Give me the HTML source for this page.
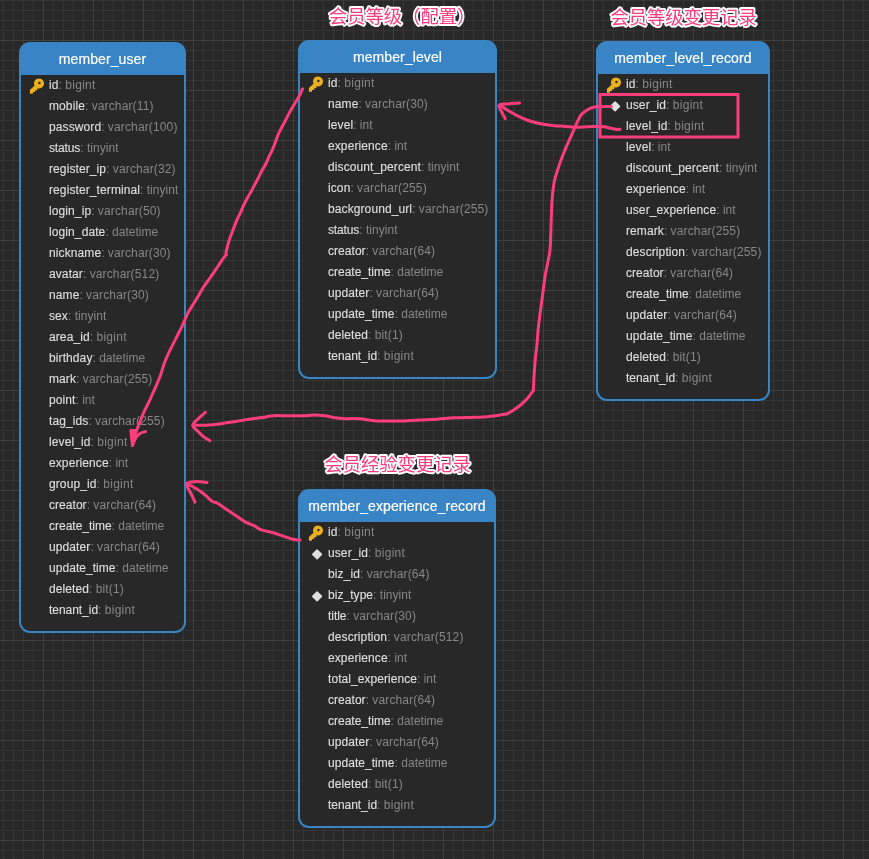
<!DOCTYPE html><html><head><meta charset="utf-8"><title>ER</title><style>

*{margin:0;padding:0;box-sizing:border-box}
html,body{width:869px;height:859px;overflow:hidden;background:#282828}
body{font-family:"Liberation Sans",sans-serif;position:relative;
 background-color:#282828;
 background-image:
  linear-gradient(to right,#404040 1px,transparent 1px),
  linear-gradient(to bottom,#404040 1px,transparent 1px),
  linear-gradient(to right,#353535 1px,transparent 1px),
  linear-gradient(to bottom,#353535 1px,transparent 1px);
 background-size:50px 50px,50px 50px,10px 10px,10px 10px;
 background-position:43px 0,0 40px,3px 0,0 0;}
.tb{position:absolute;will-change:transform;border-radius:11px;background:#3884c4;padding:0 2px 2px 2px}
.bd{background:#282828;border-radius:0 0 9px 9px;padding-bottom:10px}
.hd{height:33px;color:#fff;font-size:14px;text-align:center;line-height:35px;letter-spacing:0.1px;-webkit-text-stroke:0.2px #fff}
.rw{height:21px;position:relative;font-size:12px;line-height:21px;white-space:nowrap;color:#878787;padding-left:28px}
.rw b{font-weight:normal;color:#dedede;-webkit-text-stroke:0.15px #dedede;letter-spacing:0.1px}
.rw i{font-style:normal}
.tb_{letter-spacing:0.3px}
.tv{letter-spacing:0.14px}
.tt{letter-spacing:0.04px}
.ic{position:absolute}
.ic{left:0;top:0}
svg.ov{position:absolute;left:0;top:0}

</style></head><body>
<div class="tb" style="left:19px;top:42px;width:167px;height:591px">
<div class="hd">member_user</div><div class="bd">
<div class="rw"><svg class="ic" viewBox="0 0 30 21" width="30" height="21"><path d="M18 3.4a5.1 5.1 0 1 1-1.6 9.95L16.3 15.15H14.15V17.05H11.95V18.75H8.9V15.1L13.5 10.75A5.1 5.1 0 0 1 18 3.4zM18.4 6.8a1.2 1.2 0 1 0 0 2.4a1.2 1.2 0 0 0 0-2.4z" fill="#ecb01e" fill-rule="evenodd"/></svg><b>id</b>: <i class="tb_">bigint</i></div>
<div class="rw"><b>mobile</b>: <i class="tv">varchar(11)</i></div>
<div class="rw"><b>password</b>: <i class="tv">varchar(100)</i></div>
<div class="rw"><b style="letter-spacing:-0.13px">status</b>: <i class="tt">tinyint</i></div>
<div class="rw"><b>register_ip</b>: <i class="tv">varchar(32)</i></div>
<div class="rw"><b>register_terminal</b>: <i class="tt">tinyint</i></div>
<div class="rw"><b>login_ip</b>: <i class="tv">varchar(50)</i></div>
<div class="rw"><b>login_date</b>: <i class="to">datetime</i></div>
<div class="rw"><b>nickname</b>: <i class="tv">varchar(30)</i></div>
<div class="rw"><b>avatar</b>: <i class="tv">varchar(512)</i></div>
<div class="rw"><b>name</b>: <i class="tv">varchar(30)</i></div>
<div class="rw"><b>sex</b>: <i class="tt">tinyint</i></div>
<div class="rw"><b>area_id</b>: <i class="tb_">bigint</i></div>
<div class="rw"><b>birthday</b>: <i class="to">datetime</i></div>
<div class="rw"><b>mark</b>: <i class="tv">varchar(255)</i></div>
<div class="rw"><b>point</b>: <i class="to">int</i></div>
<div class="rw"><b>tag_ids</b>: <i class="tv">varchar(255)</i></div>
<div class="rw"><b>level_id</b>: <i class="tb_">bigint</i></div>
<div class="rw"><b>experience</b>: <i class="to">int</i></div>
<div class="rw"><b>group_id</b>: <i class="tb_">bigint</i></div>
<div class="rw"><b style="letter-spacing:0.04px">creator</b>: <i class="tv">varchar(64)</i></div>
<div class="rw"><b style="letter-spacing:-0.01px">create_time</b>: <i class="to">datetime</i></div>
<div class="rw"><b>updater</b>: <i class="tv">varchar(64)</i></div>
<div class="rw"><b style="letter-spacing:0.05px">update_time</b>: <i class="to">datetime</i></div>
<div class="rw"><b>deleted</b>: <i class="tv">bit(1)</i></div>
<div class="rw"><b style="letter-spacing:-0.04px">tenant_id</b>: <i class="tb_">bigint</i></div>
</div></div>
<div class="tb" style="left:298px;top:40px;width:199px;height:339px">
<div class="hd">member_level</div><div class="bd">
<div class="rw"><svg class="ic" viewBox="0 0 30 21" width="30" height="21"><path d="M18 3.4a5.1 5.1 0 1 1-1.6 9.95L16.3 15.15H14.15V17.05H11.95V18.75H8.9V15.1L13.5 10.75A5.1 5.1 0 0 1 18 3.4zM18.4 6.8a1.2 1.2 0 1 0 0 2.4a1.2 1.2 0 0 0 0-2.4z" fill="#ecb01e" fill-rule="evenodd"/></svg><b>id</b>: <i class="tb_">bigint</i></div>
<div class="rw"><b>name</b>: <i class="tv">varchar(30)</i></div>
<div class="rw"><b>level</b>: <i class="to">int</i></div>
<div class="rw"><b>experience</b>: <i class="to">int</i></div>
<div class="rw"><b>discount_percent</b>: <i class="tt">tinyint</i></div>
<div class="rw"><b>icon</b>: <i class="tv">varchar(255)</i></div>
<div class="rw"><b>background_url</b>: <i class="tv">varchar(255)</i></div>
<div class="rw"><b style="letter-spacing:-0.13px">status</b>: <i class="tt">tinyint</i></div>
<div class="rw"><b style="letter-spacing:0.04px">creator</b>: <i class="tv">varchar(64)</i></div>
<div class="rw"><b style="letter-spacing:-0.01px">create_time</b>: <i class="to">datetime</i></div>
<div class="rw"><b>updater</b>: <i class="tv">varchar(64)</i></div>
<div class="rw"><b style="letter-spacing:0.05px">update_time</b>: <i class="to">datetime</i></div>
<div class="rw"><b>deleted</b>: <i class="tv">bit(1)</i></div>
<div class="rw"><b style="letter-spacing:-0.04px">tenant_id</b>: <i class="tb_">bigint</i></div>
</div></div>
<div class="tb" style="left:596px;top:41px;width:174px;height:360px">
<div class="hd">member_level_record</div><div class="bd">
<div class="rw"><svg class="ic" viewBox="0 0 30 21" width="30" height="21"><path d="M18 3.4a5.1 5.1 0 1 1-1.6 9.95L16.3 15.15H14.15V17.05H11.95V18.75H8.9V15.1L13.5 10.75A5.1 5.1 0 0 1 18 3.4zM18.4 6.8a1.2 1.2 0 1 0 0 2.4a1.2 1.2 0 0 0 0-2.4z" fill="#ecb01e" fill-rule="evenodd"/></svg><b>id</b>: <i class="tb_">bigint</i></div>
<div class="rw"><svg class="ic" viewBox="0 0 30 21" width="30" height="21"><path d="M17.1 7.1L21.4 11.4L17.1 15.7L12.8 11.4Z" fill="#e0e0e0" stroke="#e0e0e0" stroke-width="1.6" stroke-linejoin="round"/></svg><b>user_id</b>: <i class="tb_">bigint</i></div>
<div class="rw"><b>level_id</b>: <i class="tb_">bigint</i></div>
<div class="rw"><b>level</b>: <i class="to">int</i></div>
<div class="rw"><b>discount_percent</b>: <i class="tt">tinyint</i></div>
<div class="rw"><b>experience</b>: <i class="to">int</i></div>
<div class="rw"><b>user_experience</b>: <i class="to">int</i></div>
<div class="rw"><b>remark</b>: <i class="tv">varchar(255)</i></div>
<div class="rw"><b>description</b>: <i class="tv">varchar(255)</i></div>
<div class="rw"><b style="letter-spacing:0.04px">creator</b>: <i class="tv">varchar(64)</i></div>
<div class="rw"><b style="letter-spacing:-0.01px">create_time</b>: <i class="to">datetime</i></div>
<div class="rw"><b>updater</b>: <i class="tv">varchar(64)</i></div>
<div class="rw"><b style="letter-spacing:0.05px">update_time</b>: <i class="to">datetime</i></div>
<div class="rw"><b>deleted</b>: <i class="tv">bit(1)</i></div>
<div class="rw"><b style="letter-spacing:-0.04px">tenant_id</b>: <i class="tb_">bigint</i></div>
</div></div>
<div class="tb" style="left:298px;top:489px;width:198px;height:339px">
<div class="hd">member_experience_record</div><div class="bd">
<div class="rw"><svg class="ic" viewBox="0 0 30 21" width="30" height="21"><path d="M18 3.4a5.1 5.1 0 1 1-1.6 9.95L16.3 15.15H14.15V17.05H11.95V18.75H8.9V15.1L13.5 10.75A5.1 5.1 0 0 1 18 3.4zM18.4 6.8a1.2 1.2 0 1 0 0 2.4a1.2 1.2 0 0 0 0-2.4z" fill="#ecb01e" fill-rule="evenodd"/></svg><b>id</b>: <i class="tb_">bigint</i></div>
<div class="rw"><svg class="ic" viewBox="0 0 30 21" width="30" height="21"><path d="M17.1 7.1L21.4 11.4L17.1 15.7L12.8 11.4Z" fill="#e0e0e0" stroke="#e0e0e0" stroke-width="1.6" stroke-linejoin="round"/></svg><b>user_id</b>: <i class="tb_">bigint</i></div>
<div class="rw"><b>biz_id</b>: <i class="tv">varchar(64)</i></div>
<div class="rw"><svg class="ic" viewBox="0 0 30 21" width="30" height="21"><path d="M17.1 7.1L21.4 11.4L17.1 15.7L12.8 11.4Z" fill="#e0e0e0" stroke="#e0e0e0" stroke-width="1.6" stroke-linejoin="round"/></svg><b style="letter-spacing:0.05px">biz_type</b>: <i class="tt">tinyint</i></div>
<div class="rw"><b style="letter-spacing:-0.04px">title</b>: <i class="tv">varchar(30)</i></div>
<div class="rw"><b>description</b>: <i class="tv">varchar(512)</i></div>
<div class="rw"><b>experience</b>: <i class="to">int</i></div>
<div class="rw"><b style="letter-spacing:0.06px">total_experience</b>: <i class="to">int</i></div>
<div class="rw"><b style="letter-spacing:0.04px">creator</b>: <i class="tv">varchar(64)</i></div>
<div class="rw"><b style="letter-spacing:-0.01px">create_time</b>: <i class="to">datetime</i></div>
<div class="rw"><b>updater</b>: <i class="tv">varchar(64)</i></div>
<div class="rw"><b style="letter-spacing:0.05px">update_time</b>: <i class="to">datetime</i></div>
<div class="rw"><b>deleted</b>: <i class="tv">bit(1)</i></div>
<div class="rw"><b style="letter-spacing:-0.04px">tenant_id</b>: <i class="tb_">bigint</i></div>
</div></div>
<svg class="ov" width="869" height="859" viewBox="0 0 869 859">
<g font-family="&quot;Liberation Sans&quot;, &quot;Noto Sans CJK SC&quot;, sans-serif" font-size="18.3" fill="#fb3d7c" stroke="#fff" stroke-width="3.8" stroke-linejoin="round" paint-order="stroke fill">
<text x="329" y="22.5">会员等级（配置）</text>
<text x="610.5" y="24.1">会员等级变更记录</text>
<text x="324.5" y="471.1">会员经验变更记录</text>
</g>
<g fill="none" stroke="#fb3d7c" stroke-width="3.0" stroke-linecap="round" stroke-linejoin="round">
<path d="M302.6,88.8 C302.0,90.1 300.1,94.5 298.9,96.8 C297.7,99.1 296.6,100.5 295.2,102.8 C293.8,105.1 292.1,107.9 290.5,110.7 C288.9,113.5 287.4,116.8 285.9,119.6 C284.4,122.4 283.0,125.0 281.7,127.5 C280.4,130.1 278.9,132.7 278.0,134.9 C277.1,137.1 277.0,137.8 276.0,140.5 C275.0,143.2 273.1,148.0 271.9,150.8 C270.7,153.6 269.6,155.2 268.6,157.4 C267.6,159.6 266.9,161.8 265.8,164.0 C264.7,166.2 263.2,168.2 262.0,170.5 C260.8,172.8 259.5,175.5 258.3,177.9 C257.1,180.3 255.8,182.6 254.6,184.9 C253.4,187.2 252.2,189.5 250.9,191.9 C249.6,194.3 247.9,197.0 246.7,199.3 C245.4,201.6 244.4,203.7 243.4,205.9 C242.4,208.1 241.6,210.2 240.6,212.4 C239.6,214.6 238.4,216.6 237.4,218.9 C236.4,221.2 235.4,223.9 234.4,226.4 C233.4,228.9 232.4,231.7 231.5,234.0 C230.6,236.3 229.8,238.3 229.1,240.5 C228.4,242.7 227.8,245.1 227.3,247.0 C226.8,248.9 226.3,250.8 226.1,252.1 C225.9,253.4 226.3,254.2 226.3,254.6"/>
<path d="M226.3,254.6 C225.6,255.5 223.6,257.9 222.1,260.0 C220.6,262.1 219.1,264.7 217.5,267.0 C215.9,269.3 214.4,271.8 212.8,274.0 C211.2,276.2 209.8,278.3 208.2,280.5 C206.6,282.7 204.9,284.8 203.5,287.0 C202.1,289.2 201.0,291.5 199.5,294.0 C198.0,296.5 196.2,299.5 194.6,302.1 C193.0,304.7 191.4,307.0 189.9,309.6 C188.4,312.2 186.9,315.3 185.7,317.9 C184.5,320.5 183.6,323.1 182.5,325.4 C181.4,327.7 180.3,329.7 179.2,331.9 C178.1,334.1 177.2,336.1 176.0,338.4 C174.8,340.7 173.4,343.4 172.2,345.9 C170.9,348.4 169.6,351.0 168.5,353.3 C167.4,355.6 166.6,357.6 165.7,359.8 C164.8,362.0 164.0,364.1 163.2,366.5 C162.4,368.9 161.9,371.4 160.9,374.3 C159.9,377.2 158.3,380.7 157.1,383.6 C155.8,386.6 154.8,388.9 153.4,392.0 C152.0,395.1 150.4,398.9 148.8,402.2 C147.2,405.5 145.5,408.5 144.1,411.6 C142.7,414.7 141.6,417.8 140.4,420.9 C139.2,424.0 137.9,427.1 136.7,430.2 C135.4,433.3 133.6,437.0 132.9,439.5 C132.2,442.0 132.6,444.3 132.5,445.3"/>
<path d="M132.5,445.3 C133.1,444.0 134.7,439.5 136.0,437.5 C137.3,435.5 138.9,434.2 140.5,433.2 C142.1,432.2 144.7,431.9 145.5,431.6"/>
<path d="M611.3,106.6 C610.2,106.6 607.2,106.5 604.5,106.6 C601.8,106.6 597.6,106.6 595.2,106.9 C592.8,107.2 591.6,107.7 590.0,108.4 C588.4,109.1 586.8,110.2 585.3,111.3 C583.8,112.4 582.4,113.3 581.2,114.8 C580.0,116.2 579.4,117.9 578.3,120.0 C577.2,122.1 576.1,124.8 574.8,127.6 C573.5,130.4 572.2,133.6 570.7,136.9 C569.2,140.2 567.7,143.7 566.1,147.4 C564.5,151.1 562.9,155.1 561.4,159.0 C559.9,162.9 558.5,167.2 557.4,170.7 C556.3,174.2 555.3,176.9 554.6,180.0 C553.9,183.1 553.6,185.3 553.1,189.3 C552.6,193.3 552.1,198.9 551.8,204.2 C551.5,209.5 551.4,215.7 551.2,221.0 C551.0,226.3 550.9,230.9 550.7,235.9 C550.5,240.9 550.4,246.2 549.9,250.8 C549.4,255.5 548.4,259.2 547.5,263.8 C546.6,268.4 545.5,273.4 544.7,278.7 C543.9,284.0 543.3,289.6 542.5,295.5 C541.7,301.4 540.7,308.5 540.0,314.1 C539.3,319.7 538.7,323.8 538.2,329.0 C537.7,334.2 537.4,339.9 536.9,345.1 C536.4,350.3 535.7,355.1 535.2,360.3 C534.7,365.6 534.3,371.6 534.0,376.6 C533.7,381.6 533.5,388.2 533.4,390.5"/>
<path d="M533.4,390.5 C532.5,391.7 530.2,395.2 528.2,397.5 C526.2,399.8 523.5,402.5 521.2,404.5 C518.9,406.5 516.5,408.1 514.2,409.7 C511.9,411.2 508.5,413.1 507.3,413.8"/>
<path d="M507.3,413.8 C505.9,414.0 502.4,414.7 499.1,415.2 C495.8,415.7 491.4,416.3 487.5,416.7 C483.6,417.1 481.3,417.1 475.8,417.3 C470.3,417.5 460.9,417.5 454.5,417.8 C448.1,418.1 443.0,418.8 437.2,419.2 C431.4,419.6 425.6,419.7 419.9,420.0 C414.1,420.3 409.9,420.8 402.7,420.9 C395.5,421.0 384.0,421.2 376.8,420.9 C369.6,420.5 365.2,419.2 359.5,418.8 C353.8,418.4 346.6,418.8 342.3,418.6 C338.0,418.4 336.5,417.9 333.6,417.4 C330.7,416.9 328.2,416.1 325.0,415.7 C321.8,415.3 317.7,414.9 314.5,414.9 C311.3,414.9 310.1,415.6 305.8,415.7 C301.5,415.8 294.1,415.7 288.6,415.7 C283.1,415.7 276.8,415.5 273.0,415.7 C269.2,415.9 269.3,416.4 266.1,416.9 C262.9,417.4 258.9,417.9 254.0,418.6 C249.1,419.3 242.6,420.3 236.8,421.2 C231.1,422.1 224.7,423.3 219.5,424.0 C214.3,424.7 210.1,425.0 205.7,425.2 C201.2,425.4 195.0,425.2 192.8,425.2"/>
<path d="M205.4,412.3 C204.4,413.1 201.8,415.2 199.7,417.4 C197.6,419.5 193.1,422.9 192.8,425.2 C192.5,427.5 196.2,429.4 197.9,431.3 C199.6,433.2 201.1,434.8 203.1,436.4 C205.1,438.0 208.8,440.0 210.0,440.7"/>
<path d="M620.2,129.3 C619.5,129.3 617.8,129.5 616.1,129.3 C614.5,129.1 612.2,128.6 610.3,128.2 C608.4,127.8 606.4,127.0 604.5,126.7 C602.6,126.4 601.4,126.4 598.7,126.4 C596.0,126.4 591.9,126.6 588.2,126.7 C584.5,126.8 579.6,127.2 576.6,127.2 C573.6,127.2 572.1,127.0 570.0,126.8 C567.9,126.6 566.3,126.5 563.7,126.3 C561.1,126.1 557.6,126.0 554.5,125.7 C551.4,125.4 548.3,125.1 545.2,124.6 C542.1,124.1 539.1,123.6 536.0,122.8 C532.9,122.0 529.9,121.2 526.8,120.0 C523.7,118.8 520.7,117.3 517.6,115.8 C514.5,114.3 510.8,112.2 508.4,110.8 C505.9,109.3 504.4,108.0 502.9,107.1 C501.4,106.2 499.8,105.6 499.2,105.3"/>
<path d="M519.5,103.0 C517.6,103.2 511.8,103.5 508.4,103.9 C505.0,104.3 500.3,103.8 499.2,105.3 C498.1,106.8 501.0,110.4 502.0,112.6 C503.0,114.8 504.7,117.6 505.2,118.6"/>
<path d="M300.0,540.1 C298.8,540.0 295.6,540.0 292.8,539.3 C290.0,538.6 286.3,537.2 283.1,536.1 C279.9,535.0 277.1,533.9 273.4,532.8 C269.6,531.7 263.8,530.8 260.6,529.6 C257.4,528.4 256.5,526.8 254.1,525.6 C251.7,524.4 249.0,524.0 246.1,522.4 C243.2,520.8 239.6,518.0 236.4,515.9 C233.2,513.8 229.9,511.6 226.7,509.5 C223.5,507.4 219.5,504.4 217.1,503.0 C214.7,501.6 214.3,502.9 212.2,501.4 C210.0,499.9 206.9,496.3 204.2,494.2 C201.5,492.1 199.0,490.2 196.1,488.5 C193.2,486.8 188.4,484.5 186.8,483.7"/>
<path d="M207.1,482.4 C205.3,482.3 199.5,481.4 196.1,481.6 C192.7,481.8 187.6,481.6 186.8,483.7 C186.0,485.8 189.9,491.1 191.3,494.2 C192.7,497.3 194.4,500.9 195.0,502.2"/>
<path d="M130.9,430.6 L136.5,430.6 L132.5,445.3 Z" fill="#fb3d7c"/>
<rect x="600" y="94.5" width="138" height="42.5" stroke-width="3" stroke-linejoin="miter"/>
</g>
</svg>
</body></html>
